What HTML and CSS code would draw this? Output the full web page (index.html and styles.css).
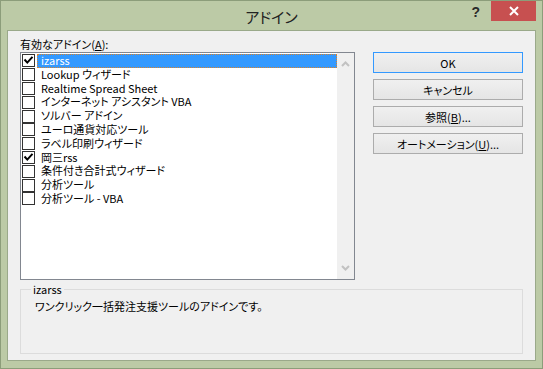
FILE: index.html
```html
<!DOCTYPE html>
<html lang="ja">
<head>
    <meta charset="UTF-8">
    <title>アドイン</title>
    <link rel="stylesheet" href="styles.css">
</head>
<body>
    <div class="window">
        <div class="titlebar">
            <div class="spacer"></div>
            <div class="title">アドイン</div>
            <div class="controls">
                <span class="help">?</span>
                <span class="close">
                    <svg width="10" height="10" viewBox="0 0 10 10">
                        <path d="M1 1L9 9M9 1L1 9" stroke="#fff" stroke-width="2"/>
                    </svg>
                </span>
            </div>
        </div>

        <div class="client">
            <div class="top-row">
                <div class="list-section">
                    <div class="label">有効なアドイン(<u>A</u>):</div>
                    <div class="listbox">
                        <ul class="items">
                            <li class="item selected">
                                <span class="check checked">
                                    <svg width="13" height="13" viewBox="0 0 13 13"><path d="M2.5 5.5L5.3 8.6L10.5 2.8" fill="none" stroke="#000" stroke-width="2"/></svg>
                                </span>
                                <span class="name">izarss</span>
                            </li>
                            <li class="item"><span class="check"></span><span class="name">Lookup ウィザード</span></li>
                            <li class="item"><span class="check"></span><span class="name">Realtime Spread Sheet</span></li>
                            <li class="item"><span class="check"></span><span class="name">インターネット アシスタント VBA</span></li>
                            <li class="item"><span class="check"></span><span class="name">ソルバー アドイン</span></li>
                            <li class="item"><span class="check"></span><span class="name">ユーロ通貨対応ツール</span></li>
                            <li class="item"><span class="check"></span><span class="name">ラベル印刷ウィザード</span></li>
                            <li class="item">
                                <span class="check checked">
                                    <svg width="13" height="13" viewBox="0 0 13 13"><path d="M2.5 5.5L5.3 8.6L10.5 2.8" fill="none" stroke="#000" stroke-width="2"/></svg>
                                </span>
                                <span class="name">岡三rss</span>
                            </li>
                            <li class="item"><span class="check"></span><span class="name">条件付き合計式ウィザード</span></li>
                            <li class="item"><span class="check"></span><span class="name">分析ツール</span></li>
                            <li class="item"><span class="check"></span><span class="name">分析ツール - VBA</span></li>
                        </ul>
                        <div class="scrollbar">
                            <svg width="9" height="6" viewBox="0 0 9 6"><path d="M1 5L4.5 1.5L8 5" fill="none" stroke="#c2c2c2" stroke-width="2"/></svg>
                            <svg width="9" height="6" viewBox="0 0 9 6"><path d="M1 1L4.5 4.5L8 1" fill="none" stroke="#c2c2c2" stroke-width="2"/></svg>
                        </div>
                    </div>
                </div>

                <div class="buttons">
                    <button class="btn default">OK</button>
                    <button class="btn">キャンセル</button>
                    <button class="btn">参照(<u>B</u>)...</button>
                    <button class="btn">オートメーション(<u>U</u>)...</button>
                </div>
            </div>

            <fieldset class="group">
                <legend>izarss</legend>
                <p class="description">ワンクリック一括発注支援ツールのアドインです。</p>
            </fieldset>
        </div>
    </div>
</body>
</html>
```

FILE: styles.css
```css
* {
    margin: 0;
    padding: 0;
    box-sizing: border-box;
}

body {
    font-family: 'Noto Sans CJK JP', sans-serif;
    font-size: 11px;
    font-feature-settings: "palt";
    color: #000;
    background: #bccaa6;
}

.window {
    width: 543px;
    height: 369px;
    border: 1px solid #8c9d7a;
    background: #bccaa6;
    display: flex;
    flex-direction: column;
}

/* title bar */

.titlebar {
    height: 29px;
    display: grid;
    grid-template-columns: 1fr auto 1fr;
    align-items: start;
}

.title {
    font-size: 15px;
    line-height: 20px;
    padding-top: 6px;
    color: #222;
}

.controls {
    display: flex;
    justify-content: flex-end;
    align-items: flex-start;
    margin-right: 6px;
}

.help {
    font-family: 'Liberation Sans', sans-serif;
    font-weight: 700;
    font-size: 14px;
    line-height: 14px;
    color: #2a2a2a;
    margin-top: 4px;
    margin-right: 11px;
}

.close {
    width: 45px;
    height: 20px;
    background: #c75050;
    display: flex;
    justify-content: center;
    align-items: center;
}

/* client area */

.client {
    flex: 1;
    margin: 0 6px 7px 6px;
    border: 1px solid #9aa98a;
    background: #f0f0f0;
    padding: 6px 12px 6px 12px;
    display: flex;
    flex-direction: column;
}

.top-row {
    display: flex;
    justify-content: space-between;
}

.label {
    line-height: 15px;
}

.listbox {
    width: 335px;
    height: 228px;
    border: 1px solid #828790;
    background: #fff;
    display: flex;
}

.items {
    list-style: none;
    flex: 1;
    padding-top: 1px;
}

.item {
    height: 13.8px;
    display: flex;
    align-items: center;
}

.check {
    width: 13px;
    height: 13px;
    margin-left: 1px;
    margin-right: 2px;
    border: 1px solid #333;
    background: #fff;
    position: relative;
}

.check svg {
    position: absolute;
    top: -1px;
    left: -1px;
}

.name {
    flex: 1;
    height: 100%;
    line-height: 13.8px;
    padding-left: 4px;
    white-space: nowrap;
}

.item.selected .name {
    background: #3399ff;
    color: #fff;
    outline: 1px dotted #d9822b;
    outline-offset: -1px;
}

.scrollbar {
    width: 17px;
    background: #f0f0f0;
    display: flex;
    flex-direction: column;
    justify-content: space-between;
    align-items: center;
    padding: 8px 0 8px 0;
}

.buttons {
    display: flex;
    flex-direction: column;
    gap: 6px;
    padding-top: 15px;
}

.btn {
    width: 150px;
    height: 21px;
    font-family: inherit;
    font-size: 11px;
    font-feature-settings: "palt";
    color: #000;
    border: 1px solid #acacac;
    background: linear-gradient(#f0f0f0 0%, #e5e5e5 100%);
}

.btn.default {
    border-color: #3399ff;
}

/* description group */

.group {
    margin-top: 2px;
    height: 72px;
    border: 1px solid #dcdcdc;
    padding: 0 10px;
}

.group legend {
    padding: 0 2px;
    line-height: 14px;
}

.description {
    padding-left: 4px;
    margin-top: 3px;
    line-height: 14px;
}
```
